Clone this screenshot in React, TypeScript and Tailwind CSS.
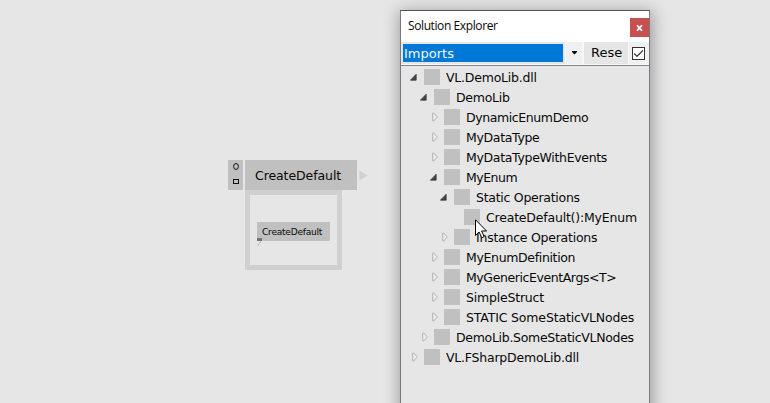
type Row = { label: string; indent: string; tracking: string; state: 'open' | 'closed' | 'leaf' };

const rows: Row[] = [
  { label: 'VL.DemoLib.dll', indent: 'pl-[9px]', tracking: 'tracking-[-0.22px]', state: 'open' },
  { label: 'DemoLib', indent: 'pl-[19px]', tracking: 'tracking-[-0.28px]', state: 'open' },
  { label: 'DynamicEnumDemo', indent: 'pl-[29px]', tracking: 'tracking-[-0.4px]', state: 'closed' },
  { label: 'MyDataType', indent: 'pl-[29px]', tracking: 'tracking-[-0.33px]', state: 'closed' },
  { label: 'MyDataTypeWithEvents', indent: 'pl-[29px]', tracking: 'tracking-[-0.32px]', state: 'closed' },
  { label: 'MyEnum', indent: 'pl-[29px]', tracking: 'tracking-[-0.5px]', state: 'open' },
  { label: 'Static Operations', indent: 'pl-[39px]', tracking: 'tracking-[-0.27px]', state: 'open' },
  { label: 'CreateDefault():MyEnum', indent: 'pl-[49px]', tracking: 'tracking-[-0.2px]', state: 'leaf' },
  { label: 'Instance Operations', indent: 'pl-[39px]', tracking: 'tracking-[-0.24px]', state: 'closed' },
  { label: 'MyEnumDefinition', indent: 'pl-[29px]', tracking: 'tracking-[-0.34px]', state: 'closed' },
  { label: 'MyGenericEventArgs<T>', indent: 'pl-[29px]', tracking: 'tracking-[-0.41px]', state: 'closed' },
  { label: 'SimpleStruct', indent: 'pl-[29px]', tracking: 'tracking-[-0.2px]', state: 'closed' },
  { label: 'STATIC SomeStaticVLNodes', indent: 'pl-[29px]', tracking: 'tracking-[-0.16px]', state: 'closed' },
  { label: 'DemoLib.SomeStaticVLNodes', indent: 'pl-[19px]', tracking: 'tracking-[-0.3px]', state: 'closed' },
  { label: 'VL.FSharpDemoLib.dll', indent: 'pl-[9px]', tracking: 'tracking-[-0.22px]', state: 'closed' },
];

function Expander({ state }: { state: Row['state'] }) {
  return (
    <svg className="h-4 w-[14px] shrink-0" viewBox="0 0 14 16">
      {state === 'open' && <path d="M6.2 5.2V11.2H0.4Z" fill="#454545" stroke="#303030" strokeWidth=".7" />}
      {state === 'closed' && <path d="M2.7 4V12H3.7L6.8 8.6V7.4L3.7 4Z" fill="#ececec" stroke="#b2b2b2" strokeWidth="1" />}
    </svg>
  );
}

function TreeRow({ label, indent, tracking, state }: Row) {
  return (
    <li className={`flex h-5 items-center ${indent}`}>
      <Expander state={state} />
      <span className="size-4 shrink-0 bg-[#c0c0c0]" />
      <span className={`pt-0.5 pl-1.5 text-[12.5px] leading-5 whitespace-nowrap ${tracking}`}>{label}</span>
    </li>
  );
}

function Node() {
  return (
    <div className="flex gap-0.5 pt-[160px]">
      <div className="flex h-[30px] w-[15px] flex-col items-center bg-[#c0c0c0] pt-[3px]">
        <svg className="h-6 w-[15px]" viewBox="0 0 15 24" fill="none" stroke="#111">
          <ellipse cx="8" cy="3.5" rx="2.4" ry="3" />
          <rect x="5.5" y="16.5" width="5" height="4" />
        </svg>
      </div>
      <div className="w-[112px]">
        <div className="h-[30px] bg-[#c0c0c0] pl-[10px] text-[12.5px] leading-[31px] tracking-[-0.08px]">CreateDefault</div>
        <div className="h-20 w-[97px] border-5 border-[#d0d0d0] pt-[27px] pl-[7px]">
          <div className="h-[19px] w-[73px] bg-[#c0c0c0] pl-[5px] text-[9px] leading-[20px] tracking-[-0.2px]">CreateDefault</div>
          <svg className="-mt-[3px] h-[11px] w-[6px]" viewBox="0 0 6 11">
            <path d="M0 0H5V3H0Z" fill="#737373" />
            <path d="M3.5 3.5L2.5 6L0 8" fill="none" stroke="#a0a0a0" strokeDasharray="2 1" />
          </svg>
        </div>
      </div>
      <svg className="mt-[10px] h-[11px] w-[9px]" viewBox="0 0 9 11">
        <path d="M0.4 0.5V10.5L8.5 5.5Z" fill="#d0d0d0" />
      </svg>
    </div>
  );
}

function Toolbar() {
  return (
    <div className="flex h-[23px] items-start bg-[#f8f8f8]">
      <div className="flex h-[22px] w-[164px] items-start bg-[#e6e6e6] pt-0.5 pl-0.5">
        <div className="h-[18px] w-[160px] bg-[#0078d7] pl-px text-[13px] leading-[19px] text-[#f2f8ff]">Imports</div>
      </div>
      <div className="ml-px flex h-[22px] w-4 items-center justify-center bg-[#f0f0f0]">
        <svg className="h-1 w-[5px]" viewBox="0 0 5 4"><path d="M0 0H5V1L2.5 3.5L0 1Z" fill="#000" /></svg>
      </div>
      <div className="ml-0.5 h-[22px] w-11 bg-[#e6e6e6] pl-[7px] text-[13px] leading-[21px]">Rese</div>
      <div className="ml-px flex h-[22px] flex-1 items-center justify-center bg-[#f0f0f0]">
        <svg className="mr-0.5 size-[13px]" viewBox="0 0 13 13" fill="none">
          <rect x=".5" y=".5" width="12" height="12" fill="#fff" stroke="#333" />
          <path d="M2.2 6.5L5 9.3L11 3.4" stroke="#333" strokeWidth="1.2" />
        </svg>
      </div>
    </div>
  );
}

export default function App() {
  return (
    <main className="relative flex h-[403px] w-[770px] overflow-hidden bg-[#e6e6e6] pl-[228px] font-['DejaVu_Sans',sans-serif] text-[#080808]">
      <Node />
      <section className="mt-[10px] ml-8 h-[410px] w-[250px] shrink-0 border border-[#777980] border-t-[#555] bg-[#e6e6e6] shadow-[1px_3px_15px_2px_rgba(0,0,0,0.32)]">
        <header className="flex h-[31px] items-start justify-between bg-white pl-[7px] font-['Open_Sans',sans-serif]">
          <h1 className="pt-[6px] text-[12px] leading-[18px] tracking-[-0.4px]">Solution Explorer</h1>
          <button className="mt-[7px] flex size-[19px] items-center justify-center bg-[#c75050]">
            <svg className="h-[6px] w-[7px]" viewBox="0 0 7 6"><path d="M1 .2L6 5.8M6 .2L1 5.8" stroke="#fff" strokeWidth="1.7" /></svg>
          </button>
        </header>
        <Toolbar />
        <ul className="h-[350px] border-t border-[#85878d] pt-px">
          {rows.map((row) => <TreeRow key={row.label} {...row} />)}
        </ul>
      </section>
      <svg className="absolute top-[219px] left-[475px] h-[20px] w-[13px]" viewBox="0 0 13 20">
        <path d="M.5 .8V16.5L4.1 13L6.8 18.8L9.2 17.7L6.6 12H11.6Z" fill="#fff" stroke="#000" />
      </svg>
    </main>
  );
}
